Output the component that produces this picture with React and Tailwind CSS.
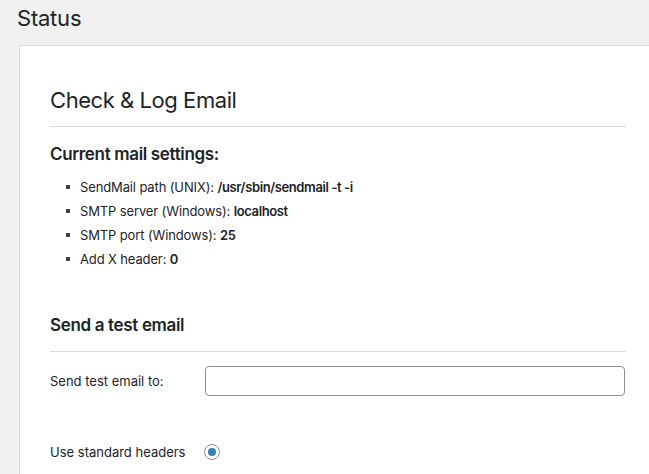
import React from "react";

export default function App() {
  return (
    <div
      className="h-[474px] w-[649px] overflow-hidden bg-[#f0f0f1] text-[#1d2327]"
      style={{ fontFamily: "Inter, 'Noto Sans', sans-serif" }}
    >
      <h1 className="pl-[17px] pt-[4px] text-[22px] leading-[28px] font-normal tracking-[-0.01em]">Status</h1>
      <div className="ml-[19px] mt-[13px] w-[700px] border border-r-0 border-[#dcdcde] bg-white pl-[30px] pt-[39px] pb-[40px] shadow-[0_1px_1px_rgba(0,0,0,0.04)]">
        <div className="w-[576px]">
          <h2 className="text-[22px] leading-[30px] font-normal tracking-[-0.02em]">Check &amp; Log Email</h2>
          <div className="mt-[11px] h-px bg-[#dcdcde]" />
          <h3 className="mt-[16px] text-[17px] leading-[22px] font-semibold tracking-[-0.02em]">Current mail settings:</h3>
          <ul className="mt-[13px] flex flex-col gap-[6px] pl-[16px] text-[13px] leading-[18px] tracking-[-0.01em]">
            <li className="flex items-center gap-[10px]">
              <span className="h-[4px] w-[4px] bg-[#3c434a]" />
              <span>
                SendMail path (UNIX): <b className="font-semibold tracking-[-0.03em]">/usr/sbin/sendmail -t -i</b>
              </span>
            </li>
            <li className="flex items-center gap-[10px]">
              <span className="h-[4px] w-[4px] bg-[#3c434a]" />
              <span>
                SMTP server (Windows): <b className="font-semibold tracking-[-0.03em]">localhost</b>
              </span>
            </li>
            <li className="flex items-center gap-[10px]">
              <span className="h-[4px] w-[4px] bg-[#3c434a]" />
              <span>
                SMTP port (Windows): <b className="font-semibold tracking-[-0.03em]">25</b>
              </span>
            </li>
            <li className="flex items-center gap-[10px]">
              <span className="h-[4px] w-[4px] bg-[#3c434a]" />
              <span>
                Add X header: <b className="font-semibold tracking-[-0.03em]">0</b>
              </span>
            </li>
          </ul>
          <h3 className="mt-[46px] text-[17px] leading-[22px] font-semibold tracking-[-0.02em]">Send a test email</h3>
          <div className="mt-[15px] h-px bg-[#dcdcde]" />
          <div className="mt-[14px] flex items-center">
            <label className="w-[155px] text-[13px] leading-[18px]">Send test email to:</label>
            <input
              type="text"
              className="h-[30px] w-[420px] rounded-[4px] border border-[#8c8f94] bg-white px-2 text-[13px] outline-none"
            />
          </div>
          <div className="mt-[47px] flex items-center">
            <span className="w-[154px] text-[13px] leading-[18px]">Use standard headers</span>
            <span className="flex h-[16px] w-[16px] items-center justify-center rounded-full border border-[#8c8f94] bg-white">
              <span className="h-[8px] w-[8px] rounded-full bg-[#2f80c0]" />
            </span>
          </div>
        </div>
      </div>
    </div>
  );
}
